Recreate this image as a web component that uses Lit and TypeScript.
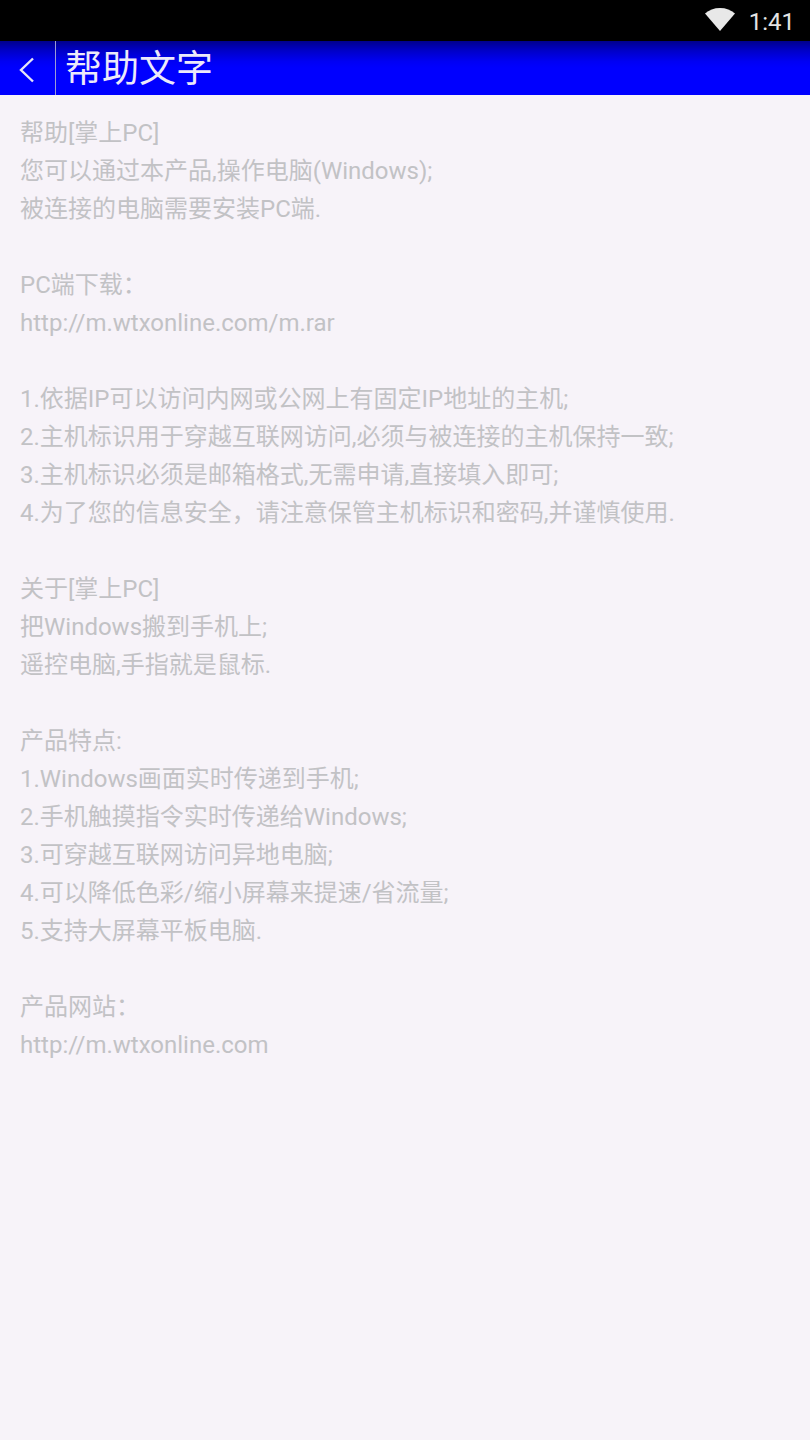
import { LitElement, html, css } from "lit";
import { customElement } from "lit/decorators.js";

const TEXT = `帮助[掌上PC]
您可以通过本产品,操作电脑(Windows);
被连接的电脑需要安装PC端.

PC端下载：
http://m.wtxonline.com/m.rar

1.依据IP可以访问内网或公网上有固定IP地址的主机;
2.主机标识用于穿越互联网访问,必须与被连接的主机保持一致;
3.主机标识必须是邮箱格式,无需申请,直接填入即可;
4.为了您的信息安全，请注意保管主机标识和密码,并谨慎使用.

关于[掌上PC]
把Windows搬到手机上;
遥控电脑,手指就是鼠标.

产品特点:
1.Windows画面实时传递到手机;
2.手机触摸指令实时传递给Windows;
3.可穿越互联网访问异地电脑;
4.可以降低色彩/缩小屏幕来提速/省流量;
5.支持大屏幕平板电脑.

产品网站：
http://m.wtxonline.com`;

@customElement("app-root")
export class AppRoot extends LitElement {
  static styles = css`
    :host {
      display: flex;
      flex-direction: column;
      width: 810px;
      height: 1440px;
      background: #f7f3f9;
      font-family: Roboto, "Noto Sans CJK SC", sans-serif;
      overflow: hidden;
    }
    .status {
      height: 41px;
      background: #000;
      display: flex;
      align-items: center;
      justify-content: flex-end;
      padding-right: 15px;
      gap: 14px;
      color: #e4e4e4;
      font-size: 24px;
      flex: none;
    }
    .status span { padding-top: 2px; }
    .status svg { display: block; margin-top: -2px; }
    .bar {
      height: 54px;
      flex: none;
      display: flex;
      align-items: stretch;
      background: linear-gradient(#00008c 0%, #0000c8 18%, #0000f4 38%, #0000ff 50%, #0000ff 100%);
      color: #ece9fa;
    }
    .back {
      width: 56px;
      flex: none;
      box-sizing: border-box;
      border-right: 1px solid #9c9cd4;
      display: flex;
      align-items: center;
      justify-content: center;
      padding: 3px 2px 0 0;
    }
    .title {
      font-size: 37px;
      line-height: 54px;
      padding: 2px 0 0 9px;
    }
    .body {
      padding: 19px 20px 0;
      font-size: 24px;
      line-height: 38px;
      color: #c2c2c5;
      white-space: pre-line;
    }
  `;

  render() {
    return html`
      <div class="status">
        <svg width="30" height="23" viewBox="0 0 30 23">
          <path d="M0 5.5C4 2 9 0 15 0s11 2 15 5.5L15 23z" fill="#e8e8e8" />
        </svg>
        <span>1:41</span>
      </div>
      <div class="bar">
        <div class="back">
          <svg width="18" height="26" viewBox="0 0 18 26">
            <path d="M15 1.5 3 13l12 11.5" fill="none" stroke="#e6e4f6" stroke-width="2.4" />
          </svg>
        </div>
        <div class="title">帮助文字</div>
      </div>
      <div class="body">${TEXT}</div>
    `;
  }
}
